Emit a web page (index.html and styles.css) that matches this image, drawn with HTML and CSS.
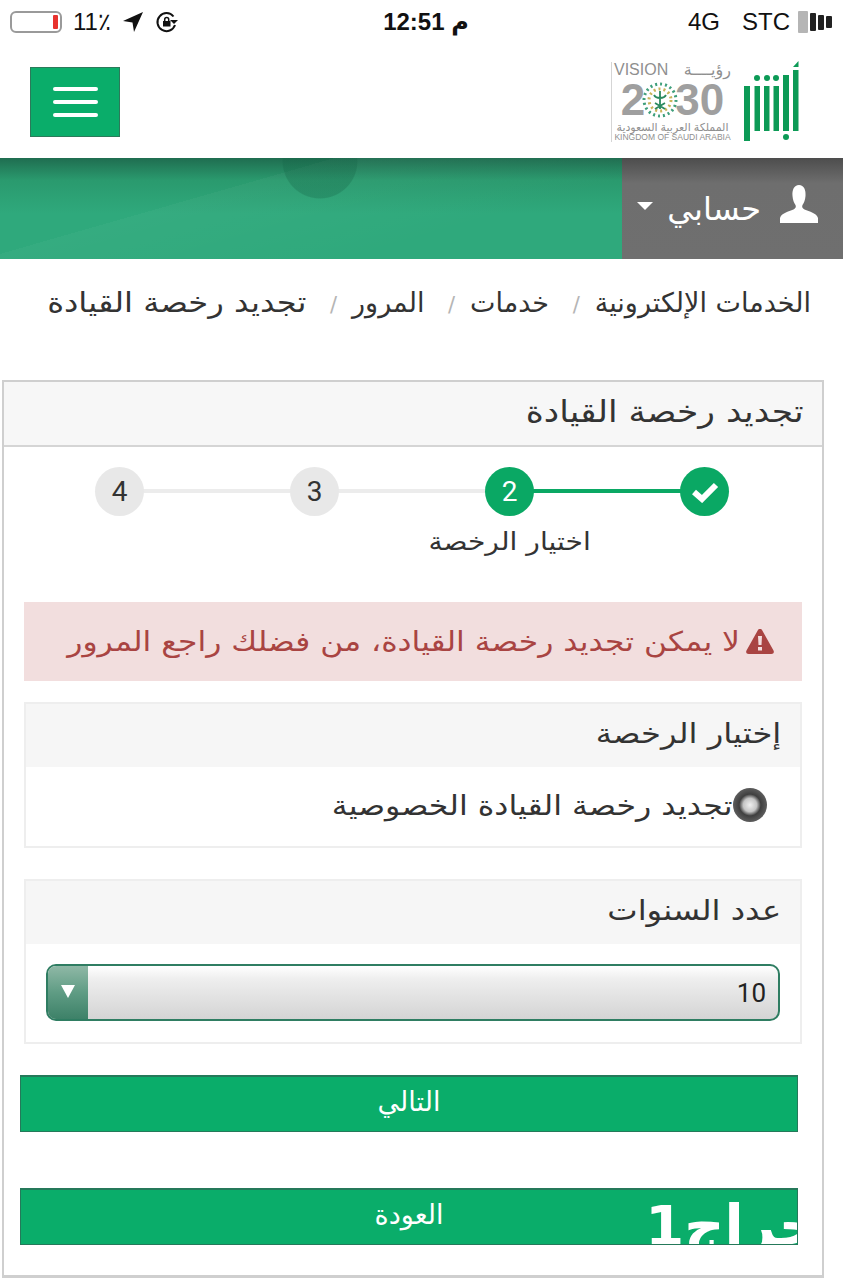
FILE: index.html
```html
<!DOCTYPE html>
<html lang="ar" dir="rtl">
<head>
  <meta charset="UTF-8" />
  <meta name="viewport" content="width=device-width, initial-scale=1.0" />
  <title>تجديد رخصة القيادة</title>
  <link rel="stylesheet" href="styles.css">
</head>
<body>
  <div class="status-bar" dir="ltr">
    <div class="status-side">
      <span class="battery"><span class="battery-level"></span></span>
      <span class="status-text">11٪</span>
      <svg class="status-icon" width="22" height="22" viewBox="0 0 22 22"><path d="M21 1 1 10l9.500 1.500L12 21z" fill="#111"/></svg>
      <svg class="status-icon" width="24" height="24" viewBox="0 0 24 24" fill="none" stroke="#111" stroke-width="2"><path d="M20 15a9 9 0 1 1-1.500-8.500"/><path d="M23 10l-4 4-4-4z" fill="#111" stroke="none"/><rect x="8" y="11" width="7.500" height="5.500" fill="#111" stroke="none"/><path d="M9.700 11V9.500a2 2 0 0 1 4 0V11" stroke-width="1.500"/></svg>
    </div>
    <div class="status-time">م 12:51</div>
    <div class="status-side">
      <span class="status-text">4G</span>
      <span class="status-text carrier">STC</span>
      <span class="signal"><i></i><i></i><i></i><i></i></span>
    </div>
  </div>

  <header class="site-header">
    <div class="logos">
      <svg class="logo-absher" width="56" height="84" viewBox="0 0 56 84" fill="#0c9a56">
        <rect x="0" y="26" width="6" height="55"/>
        <rect x="10.500" y="26" width="5.500" height="45"/>
        <rect x="20" y="26" width="5.500" height="45"/>
        <rect x="29.500" y="26" width="5.500" height="45"/>
        <rect x="39" y="15" width="6" height="56"/>
        <rect x="49" y="10" width="5.500" height="61"/>
        <path d="M49 7l5.500-6v6z"/>
        <circle cx="13" cy="18" r="3"/><circle cx="23" cy="18" r="3"/><circle cx="32" cy="18" r="3"/>
        <circle cx="42" cy="77" r="3"/>
      </svg>
      <div class="vision">
        <div class="vision-top"><span>رؤيــــة</span><span>VISION</span></div>
        <div class="vision-year" dir="ltr">2<svg class="emblem" width="36" height="40" viewBox="0 0 36 40"><g fill="none" stroke-width="3" stroke-dasharray="2 3"><circle cx="18" cy="20" r="16" stroke="#3f9f7b"/><circle cx="18" cy="20" r="11" stroke="#c9b458"/></g><path d="M18 11v18M12 15c2 4 10 4 12 0M13 29l10-6M23 29l-10-6" stroke="#2b8a5f" stroke-width="1.800" fill="none"/></svg>30</div>
        <div class="vision-ar">المملكة العربية السعودية</div>
        <div class="vision-en" dir="ltr">KINGDOM OF SAUDI ARABIA</div>
      </div>
    </div>
    <button class="menu-toggle" aria-label="menu"><i></i><i></i><i></i></button>
  </header>

  <div class="banner">
    <div class="account">
      <svg class="account-icon" width="40" height="40" viewBox="0 0 40 40" fill="#fff"><path d="M20 1c5 0 7 5 6.500 11-.3 4-1.500 7-3 9-.8 1.500-.2 3.500 2 4.500 5 2 12 3.500 13.500 8.500v5H1v-5c1.500-5 8.500-6.500 13.500-8.500 2.200-1 2.800-3 2-4.500-1.500-2-2.700-5-3-9C13 6 15 1 20 1z"/></svg>
      <span class="account-name">حسابي</span>
      <span class="caret"></span>
    </div>
  </div>

  <nav class="breadcrumb">
    <a>الخدمات الإلكترونية</a><span class="sep">/</span>
    <a>خدمات</a><span class="sep">/</span>
    <a>المرور</a><span class="sep">/</span>
    <a class="wide current">تجديد رخصة القيادة</a>
  </nav>

  <section class="card">
    <h2 class="card-title"><span class="wide">تجديد رخصة القيادة</span></h2>
    <div class="card-body">
      <ol class="steps">
        <li class="step done">
          <span class="step-dot"><svg width="28" height="22" viewBox="0 0 28 22"><path d="M3 11l8 7L25 4" fill="none" stroke="#fff" stroke-width="6"/></svg></span>
        </li>
        <li class="step active">
          <span class="step-dot">2</span>
          <span class="wide step-label">اختيار الرخصة</span>
        </li>
        <li class="step"><span class="step-dot">3</span></li>
        <li class="step"><span class="step-dot">4</span></li>
      </ol>

      <div class="alert">
        <svg width="28" height="25" viewBox="0 0 28 25"><path d="M14 0c1 0 1.800.5 2.300 1.400l11.200 20c1 1.800-.2 3.600-2.200 3.600H2.700C.7 25-.5 23.200.5 21.400l11.200-20C12.200.5 13 0 14 0z" fill="#a94442"/><path d="M12 7h4l-.5 9h-3zM12 18h4v3.500h-4z" fill="#f2dede"/></svg>
        <span class="wide">لا يمكن تجديد رخصة القيادة، من فضلك راجع المرور</span>
      </div>

      <div class="box">
        <div class="box-title"><span class="wide">إختيار الرخصة</span></div>
        <div class="box-body radio-row">
          <span class="radio"></span><span class="wide">تجديد رخصة القيادة الخصوصية</span>
        </div>
      </div>

      <div class="box years">
        <div class="box-title"><span class="wide">عدد السنوات</span></div>
        <div class="box-body select-wrap">
          <div class="select">
            <span class="select-value">10</span>
            <span class="select-arrow"></span>
          </div>
        </div>
      </div>

      <div class="actions">
        <button class="action">التالي</button>
        <button class="action">العودة<span class="watermark" dir="rtl">حراج1</span></button>
      </div>
    </div>
  </section>
</body>
</html>
```

FILE: styles.css
```css
* {
  box-sizing: border-box;
}

body {
  margin: 0;
  padding: 0;
  background-color: #ffffff;
  color: #333333;
  font-family: "DejaVu Sans", sans-serif;
  height: 1280px;
  overflow: hidden;
}

/* the site's arabic face is wider than anything installed */
.wide {
  display: inline-block;
  transform: scaleX(1.15);
  transform-origin: right center;
  white-space: nowrap;
}

/* status bar */
.status-bar {
  height: 44px;
  padding: 0 11px 0 10px;
  display: flex;
  align-items: center;
  justify-content: space-between;
  color: #111111;
  font-family: "Liberation Sans", sans-serif;
}

.status-side {
  display: flex;
  align-items: center;
  gap: 11px;
  width: 210px;
}

.status-side:last-child {
  justify-content: flex-end;
  gap: 8px;
  width: 200px;
}

.status-text {
  font-size: 24px;
}

.carrier {
  margin-left: 14px;
}

.battery {
  width: 52px;
  height: 22px;
  border: 2px solid #9a9a9a;
  border-radius: 6px;
  padding: 2px;
  display: flex;
  justify-content: flex-end;
}

.battery-level {
  width: 5px;
  background-color: #e8322e;
  border-radius: 1px;
}

.status-time {
  font-size: 24px;
  font-weight: bold;
  font-family: "Liberation Sans", "DejaVu Sans", sans-serif;
}

.signal {
  display: flex;
  align-items: center;
  gap: 2px;
  height: 22px;
}

.signal i {
  display: block;
  width: 6px;
  height: 12px;
  background-color: #222222;
  border-radius: 1px;
}

.signal i:nth-child(1) {
  height: 22px;
  width: 10px;
  background-color: #b5b5b5;
}

.signal i:nth-child(2) {
  height: 18px;
}

.signal i:nth-child(3) {
  height: 15px;
}

/* header */
.site-header {
  height: 114px;
  padding: 2px 43px 0 30px;
  display: flex;
  align-items: center;
  justify-content: space-between;
}

.logos {
  display: flex;
  align-items: center;
  gap: 13px;
}

.vision {
  width: 120px;
  padding-left: 2px;
  border-left: 1px solid #d5d5d5;
  color: #8f8f8f;
  font-family: "Liberation Sans", "DejaVu Sans", sans-serif;
  text-align: center;
  line-height: 1;
}

.vision-top {
  display: flex;
  justify-content: space-between;
  font-size: 16px;
}

.vision-year {
  display: flex;
  align-items: center;
  justify-content: center;
  font-size: 44px;
  font-weight: bold;
  color: #9f9f9f;
}

.emblem {
  margin: 0 -3px;
}

.vision-ar {
  font-size: 11px;
  white-space: nowrap;
}

.vision-en {
  font-size: 8.500px;
  white-space: nowrap;
}

.menu-toggle {
  width: 90px;
  height: 70px;
  background-color: #0aad6a;
  border: 1px solid #2c7a5a;
  display: flex;
  flex-direction: column;
  align-items: center;
  justify-content: center;
  gap: 9px;
  padding: 0;
}

.menu-toggle i {
  display: block;
  width: 45px;
  height: 4px;
  background-color: #ffffff;
  border-radius: 2px;
}

/* banner */
.banner {
  height: 101px;
  background:
    radial-gradient(circle 38px at 320px 3px, rgba(20, 100, 70, 0.3) 97%, transparent),
    linear-gradient(164deg, transparent 28%, rgba(255, 255, 255, 0.03) 28%, transparent 60%),
    linear-gradient(#1f6d50, #2a9a6e 22%, #2fa97c 55%, #2fa97c);
  display: flex;
}

.account {
  width: 221px;
  padding: 0 24px 0 0;
  display: flex;
  align-items: center;
  gap: 18px;
  color: #ffffff;
  font-size: 32px;
  background: linear-gradient(#4d4d4d, #6e6e6e 25%, #6f6f6f);
}

.account-icon {
  margin-top: -9px;
}

.account-name {
  line-height: 1;
}

.caret {
  width: 0;
  height: 0;
  margin-top: -6px;
  margin-right: -4px;
  border-left: 8px solid transparent;
  border-right: 8px solid transparent;
  border-top: 8px solid #ffffff;
}

/* breadcrumb */
.breadcrumb {
  padding: 26px 32px 0 0;
  height: 121px;
  font-size: 27px;
  line-height: 36px;
  color: #333333;
  white-space: nowrap;
}

.current {
  font-size: 28px;
}

.sep {
  color: #b5b5b5;
  font-size: 21px;
  margin: 0 15px;
}

/* main card */
.card {
  width: 822px;
  margin-right: 19px;
  height: 898px;
  border: 2px solid #cfcfcf;
  border-bottom-width: 3px;
}

.card-title {
  margin: 0;
  height: 65px;
  padding: 0 18px;
  background-color: #f7f7f7;
  border-bottom: 2px solid #d5d5d5;
  font-size: 30px;
  font-weight: normal;
  line-height: 60px;
  color: #333333;
}

.card-body {
  padding: 20px 20px 0;
}

/* steps */
.steps {
  list-style: none;
  margin: 0;
  padding: 0;
  display: grid;
  grid-template-columns: repeat(4, 195px);
  height: 135px;
}

.step {
  position: relative;
  display: flex;
  flex-direction: column;
  align-items: center;
}

.step-dot {
  position: relative;
  z-index: 1;
  width: 49px;
  height: 49px;
  border-radius: 50%;
  background-color: #e8e8e8;
  color: #333333;
  font-family: "Roboto", sans-serif;
  font-size: 28px;
  display: flex;
  align-items: center;
  justify-content: center;
}

.step:not(:last-child)::after {
  content: "";
  position: absolute;
  top: 22px;
  right: 50%;
  width: 195px;
  height: 4px;
  background-color: #ececec;
}

.step.done::after {
  background-color: #0aa864;
}

.step.done .step-dot,
.step.active .step-dot {
  background-color: #0aa864;
  color: #ffffff;
}

.step-label {
  margin-top: 8px;
  font-size: 24.500px;
  line-height: 36px;
  transform-origin: center;
}

/* alert */
.alert {
  height: 79px;
  padding: 0 28px 0 0;
  background-color: #f2dede;
  color: #a94442;
  font-size: 27.300px;
  display: flex;
  align-items: center;
  gap: 6px;
}

/* boxes */
.box {
  margin-top: 21px;
  height: 146px;
  border: 2px solid #eeeeee;
}

.box-title {
  height: 63px;
  padding: 0 19px;
  background-color: #f6f6f6;
  font-size: 28px;
  line-height: 60px;
}

.radio-row {
  display: flex;
  align-items: center;
  height: 79px;
  padding: 0 33px 4px 0;
  font-size: 27.500px;
}

.radio {
  width: 34px;
  height: 34px;
  flex-shrink: 0;
  border-radius: 50%;
  background: radial-gradient(circle, #f0f0f0 0, #c4c4c4 28%, #3f3f3f 45%, #5a5a5a 68%, #2a2a2a 100%);
}

.years {
  margin-top: 31px;
  height: 165px;
}

.select-wrap {
  padding: 20px 20px 0;
}

.select {
  height: 57px;
  display: flex;
  justify-content: space-between;
  align-items: center;
  border: 2px solid #2f7d62;
  border-radius: 10px;
  overflow: hidden;
  background: linear-gradient(#ffffff, #eeeeee 25%, #d4d4d4);
}

.select-value {
  padding-right: 12px;
  font-family: "Roboto", sans-serif;
  font-size: 26px;
  color: #222222;
}

.select-arrow {
  width: 40px;
  height: 100%;
  background: linear-gradient(#8fb8a6, #5f9c84 50%, #3d8168);
  display: flex;
  justify-content: center;
  padding-top: 19px;
}

.select-arrow::before {
  content: "";
  width: 0;
  height: 0;
  border-left: 7px solid transparent;
  border-right: 7px solid transparent;
  border-top: 13px solid #ffffff;
}

/* buttons */
.actions {
  margin: 31px 4px 0 -4px;
  display: flex;
  flex-direction: column;
  gap: 56px;
}

.action {
  position: relative;
  overflow: hidden;
  height: 57px;
  padding: 0 0 6px;
  background-color: #0aad6a;
  border: 1px solid #25795a;
  border-top-width: 2px;
  color: #ffffff;
  font-family: "DejaVu Sans", sans-serif;
  font-size: 27px;
}

.watermark {
  position: absolute;
  right: -22px;
  top: 6px;
  color: #ffffff;
  font-size: 56px;
  font-weight: bold;
  line-height: 60px;
}
```
